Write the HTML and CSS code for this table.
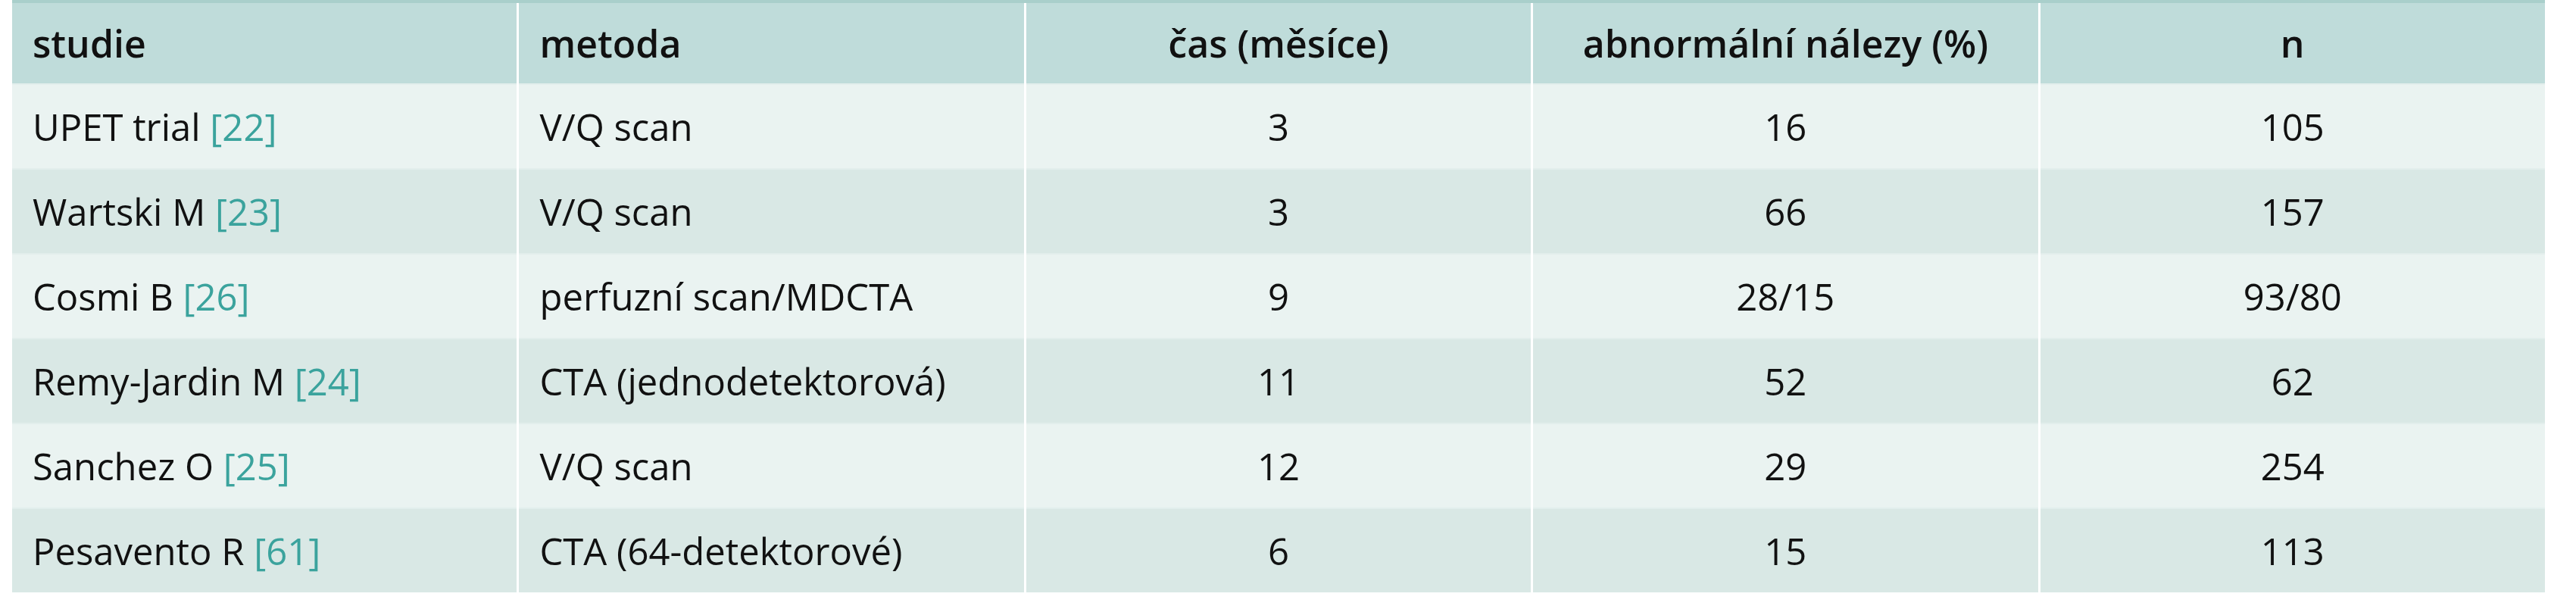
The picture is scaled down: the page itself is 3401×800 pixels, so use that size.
FILE: index.html
```html
<!DOCTYPE html>
<html lang="cs">
<head>
<meta charset="utf-8">
<title>Tabulka</title>
<link rel="stylesheet" href="styles.css">
</head>
<body>
<table class="data">
  <thead>
    <tr>
      <th class="left">studie</th>
      <th class="left">metoda</th>
      <th>čas (měsíce)</th>
      <th>abnormální nálezy (%)</th>
      <th>n</th>
    </tr>
  </thead>
  <tbody>
    <tr class="odd">
      <td class="left">UPET trial <span class="ref">[22]</span></td>
      <td class="left">V/Q scan</td>
      <td>3</td>
      <td>16</td>
      <td>105</td>
    </tr>
    <tr class="even">
      <td class="left">Wartski M <span class="ref">[23]</span></td>
      <td class="left">V/Q scan</td>
      <td>3</td>
      <td>66</td>
      <td>157</td>
    </tr>
    <tr class="odd">
      <td class="left">Cosmi B <span class="ref">[26]</span></td>
      <td class="left">perfuzní scan/MDCTA</td>
      <td>9</td>
      <td>28/15</td>
      <td>93/80</td>
    </tr>
    <tr class="even">
      <td class="left">Remy-Jardin M <span class="ref">[24]</span></td>
      <td class="left">CTA (jednodetektorová)</td>
      <td>11</td>
      <td>52</td>
      <td>62</td>
    </tr>
    <tr class="odd">
      <td class="left">Sanchez O <span class="ref">[25]</span></td>
      <td class="left">V/Q scan</td>
      <td>12</td>
      <td>29</td>
      <td>254</td>
    </tr>
    <tr class="even">
      <td class="left">Pesavento R <span class="ref">[61]</span></td>
      <td class="left">CTA (64-detektorové)</td>
      <td>6</td>
      <td>15</td>
      <td>113</td>
    </tr>
  </tbody>
</table>
</body>
</html>
```

FILE: styles.css
```css
html, body {
  margin: 0;
  padding: 0;
  background: #ffffff;
}

body {
  padding-left: 16px;
  font-family: "Open Sans", "Noto Sans", sans-serif;
  color: #111111;
}

.data {
  width: 3344px;
  border-collapse: collapse;
  table-layout: fixed;
  font-size: 49px;
}

.data th,
.data td {
  width: 20%;
  text-align: center;
  vertical-align: middle;
  padding: 0 27px;
  border-left: 3px solid #ffffff;
  white-space: nowrap;
}

.data th:first-child,
.data td:first-child {
  border-left: none;
}

.data .left {
  text-align: left;
}

.data thead tr {
  background: #bfdcda;
  border-top: 4px solid #a9cfcb;
}

.data th {
  height: 106px;
  font-size: 50px;
  font-weight: 600;
}

.data tbody tr {
  border-top: 2px solid #e2eeec;
}

.data td {
  height: 110px;
  font-weight: 400;
}

.data .odd {
  background: #eaf3f1;
}

.data .even {
  background: #d9e8e5;
}

.ref {
  color: #3ba39d;
}
```
